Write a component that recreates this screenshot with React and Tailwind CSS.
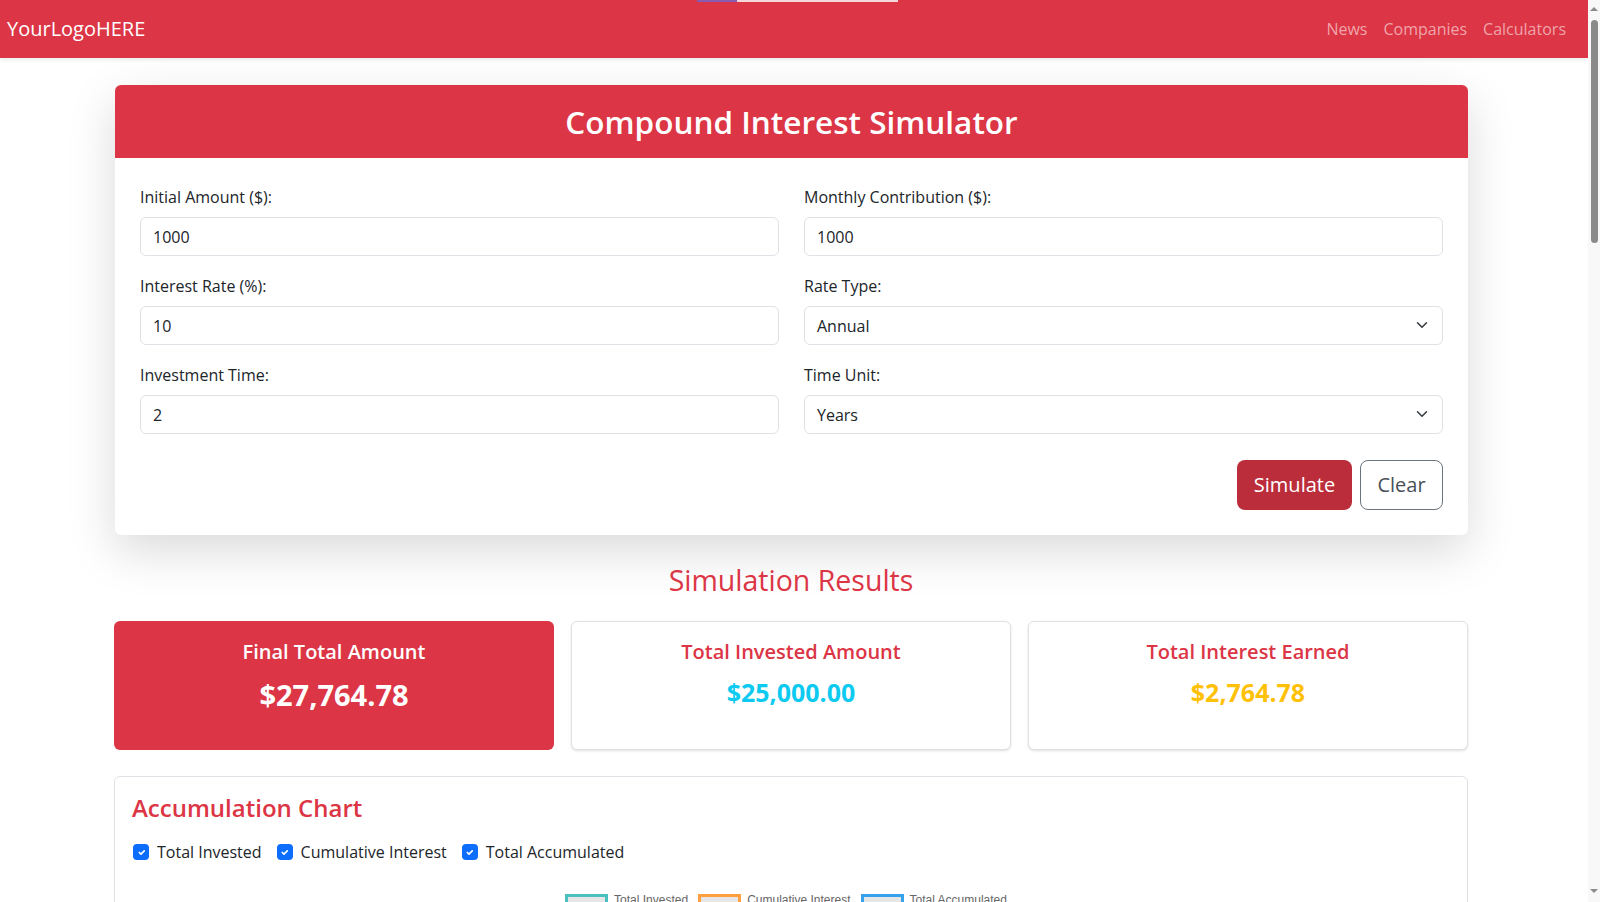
import { useState } from "react";

const font = { fontFamily: '"Segoe UI", "Open Sans", "Liberation Sans", sans-serif' };

function Field({ label, children }) {
  return (
    <div className="mb-[18px]">
      <label className="block text-[16px] leading-6 text-[#212529] mb-2">{label}</label>
      {children}
    </div>
  );
}

function TextInput({ value, onChange }) {
  return (
    <input
      type="text"
      value={value}
      onChange={onChange}
      className="w-full h-[39px] px-[12px] rounded-md border border-[#dee2e6] text-[16px] text-[#212529] bg-white outline-none"
    />
  );
}

function SelectBox({ value, options }) {
  return (
    <div className="relative h-[39px] rounded-md border border-[#dee2e6] bg-white px-[12px] flex items-center text-[16px] text-[#212529]">
      <span>{value}</span>
      <svg width="12" height="12" viewBox="0 0 16 16" className="absolute right-[14px] top-[12px]">
        <path d="M2 5l6 6 6-6" fill="none" stroke="#343a40" strokeWidth="2" strokeLinecap="round" strokeLinejoin="round" />
      </svg>
      <select className="absolute inset-0 opacity-0" defaultValue={value}>
        {options.map((o) => (
          <option key={o}>{o}</option>
        ))}
      </select>
    </div>
  );
}

function Check({ label }) {
  return (
    <label className="flex items-center mr-[15px] text-[16px] leading-6 text-[#212529]">
      <span className="w-4 h-4 rounded-[4px] bg-[#0d6efd] flex items-center justify-center mr-2">
        <svg width="11" height="11" viewBox="0 0 20 20">
          <path d="M6 10l3 3 6-6" fill="none" stroke="white" strokeWidth="3" strokeLinecap="round" strokeLinejoin="round" />
        </svg>
      </span>
      {label}
    </label>
  );
}

function LegendItem({ color, label }) {
  return (
    <div className="flex items-start mr-[10px]" style={{ fontFamily: '"Liberation Sans", Arial, sans-serif' }}>
      <span className={`w-[43px] h-[13px] border-[3px] bg-[#e6e6e6] ${color}`} />
      <span className="ml-[6px] -mt-px text-[12px] leading-[14px] text-[#666]">{label}</span>
    </div>
  );
}

export default function App() {
  const [form, setForm] = useState({ initial: "1000", monthly: "1000", rate: "10", time: "2" });

  function update(field) {
    return (e) => setForm((f) => ({ ...f, [field]: e.target.value }));
  }

  return (
    <div className="w-[1600px] h-[902px] overflow-hidden bg-white flex" style={font}>
      <div className="w-[1588px] h-[902px] overflow-hidden relative">
        {/* top progress line */}
        <div className="absolute top-0 left-[697px] w-[40px] h-[2px] bg-[#8a5bb0] z-10" />
        <div className="absolute top-0 left-[737px] w-[161px] h-[2px] bg-[#f4d7da] z-10" />

        <nav className="h-[58px] bg-[#dc3545] flex items-center justify-between pl-[7px] pr-[14px] shadow-[0_2px_4px_rgba(0,0,0,0.08)]">
          <span className="text-[20px] text-white">YourLogoHERE</span>
          <div className="flex text-[16px] text-[#efa4ab]">
            <span className="px-2">News</span>
            <span className="px-2">Companies</span>
            <span className="px-2">Calculators</span>
          </div>
        </nav>

        <div className="w-[1354px] ml-[114px]">
          <div className="mt-[27px] ml-px w-[1353px] rounded-md bg-white shadow-[0_16px_48px_rgba(0,0,0,0.15)]">
            <div className="h-[73px] rounded-t-md bg-[#dc3545] flex items-center justify-center">
              <h1 className="text-[31.5px] font-semibold text-white">Compound Interest Simulator</h1>
            </div>
            <div className="px-[25px] pt-[27px] pb-[25px]">
              <div className="grid grid-cols-2 gap-x-[25px]">
                <Field label="Initial Amount ($):">
                  <TextInput value={form.initial} onChange={update("initial")} />
                </Field>
                <Field label="Monthly Contribution ($):">
                  <TextInput value={form.monthly} onChange={update("monthly")} />
                </Field>
                <Field label="Interest Rate (%):">
                  <TextInput value={form.rate} onChange={update("rate")} />
                </Field>
                <Field label="Rate Type:">
                  <SelectBox value="Annual" options={["Annual", "Monthly"]} />
                </Field>
                <Field label="Investment Time:">
                  <TextInput value={form.time} onChange={update("time")} />
                </Field>
                <Field label="Time Unit:">
                  <SelectBox value="Years" options={["Years", "Months"]} />
                </Field>
              </div>
              <div className="flex justify-end gap-2 mt-2">
                <button className="h-[50px] w-[115px] rounded-lg bg-[#bb2d3b] text-white text-[20px]">Simulate</button>
                <button className="h-[50px] w-[83px] rounded-lg border border-[#6c757d] bg-white text-[#495057] text-[20px]">
                  Clear
                </button>
              </div>
            </div>
          </div>

          <h2 className="mt-[27px] mb-[23px] text-center text-[28.5px] leading-9 font-medium text-[#dc3545]">Simulation Results</h2>

          <div className="grid grid-cols-3 gap-[17px]">
            <div className="h-[129px] rounded-md bg-[#dc3545] flex flex-col items-center pt-[19px]">
              <div className="text-[20px] leading-6 font-semibold text-white">Final Total Amount</div>
              <div className="mt-[11px] text-[29px] leading-10 font-bold text-white">$27,764.78</div>
            </div>
            <div className="h-[129px] rounded-md border border-[#dee2e6] bg-white flex flex-col items-center pt-[18px] shadow-sm">
              <div className="text-[20px] leading-6 font-semibold text-[#dc3545]">Total Invested Amount</div>
              <div className="mt-[12px] text-[25px] leading-8 font-bold text-[#0dcaf0]">$25,000.00</div>
            </div>
            <div className="h-[129px] rounded-md border border-[#dee2e6] bg-white flex flex-col items-center pt-[18px] shadow-sm">
              <div className="text-[20px] leading-6 font-semibold text-[#dc3545]">Total Interest Earned</div>
              <div className="mt-[12px] text-[25px] leading-8 font-bold text-[#ffc107]">$2,764.78</div>
            </div>
          </div>

          <div className="mt-[26px] rounded-md border border-[#dee2e6] bg-white pl-[17px] pr-4 pt-[15px] h-[300px]">
            <h3 className="text-[24px] leading-8 font-semibold text-[#dc3545]">Accumulation Chart</h3>
            <div className="flex items-center mt-4 ml-px">
              <Check label="Total Invested" />
              <Check label="Cumulative Interest" />
              <Check label="Total Accumulated" />
            </div>
            <div className="flex justify-center mt-[30px] -ml-px">
              <LegendItem color="border-[#4bc0c0]" label="Total Invested" />
              <LegendItem color="border-[#ff9f40]" label="Cumulative Interest" />
              <LegendItem color="border-[#36a2eb]" label="Total Accumulated" />
            </div>
          </div>
        </div>
      </div>

      {/* window scrollbar */}
      <div className="w-[12px] h-[902px] bg-[#f8f8f8] flex flex-col items-center">
        <svg width="8" height="6" viewBox="0 0 8 6" className="mt-[6px]">
          <path d="M0 5L4 1l4 4z" fill="#8a8a8a" />
        </svg>
        <div className="w-[7px] h-[223px] mt-[8px] rounded-full bg-[#8a8a8a]" />
        <div className="flex-1" />
        <svg width="8" height="6" viewBox="0 0 8 6" className="mb-[8px]">
          <path d="M0 1L4 5l4-4z" fill="#8a8a8a" />
        </svg>
      </div>
    </div>
  );
}
